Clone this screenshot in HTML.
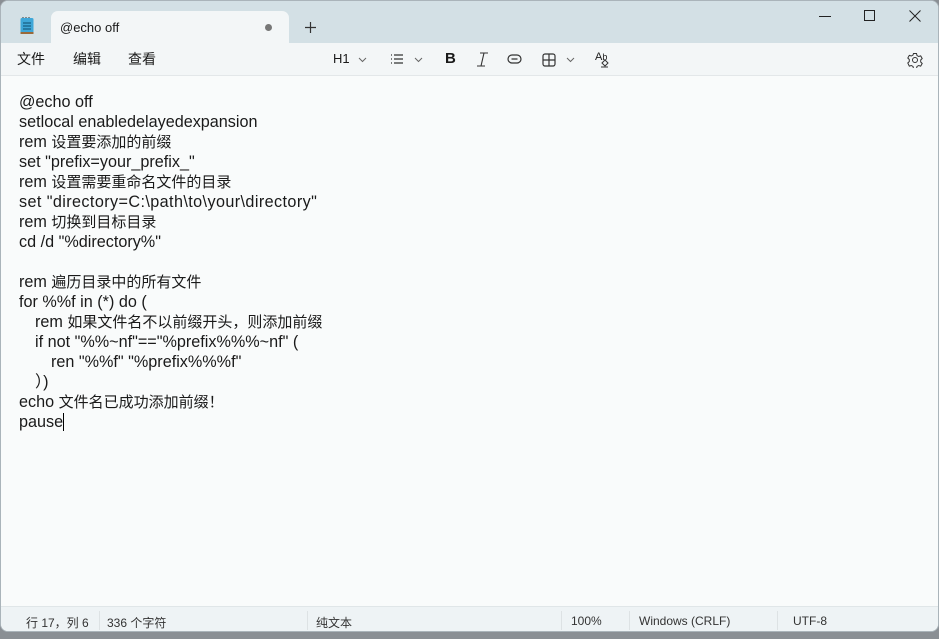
<!DOCTYPE html>
<html><head><meta charset="utf-8"><style>
*{margin:0;padding:0;box-sizing:border-box}
body{width:939px;height:639px;background:#8a8f94;position:relative;overflow:hidden;font-family:"Liberation Sans","Noto Sans CJK SC",sans-serif;color:#1a1a1a}
.win{position:absolute;left:0;top:0;width:939px;height:632px;background:#f9fbfb;border:1px solid #aab4ba;border-radius:8px;overflow:hidden}
.title{position:absolute;left:0;top:0;width:100%;height:42px;background:#d3e0e5}
.tab{position:absolute;left:50px;top:10px;width:238px;height:33px;background:#f3f6f7;border-radius:7px 7px 0 0}
.tab span{position:absolute;left:9px;top:9px;font-size:13px}
.dot{position:absolute;left:214px;top:13px;width:7px;height:7px;border-radius:50%;background:#777}
.tb{position:absolute;left:0;top:42px;width:100%;height:33px;background:#f3f6f7;border-bottom:1px solid #e3e7e9;font-size:14px}
.tb .m{position:absolute;top:6px}
.ed{position:absolute;left:18px;top:91px;font-size:16.2px;line-height:20px}
.ed div{height:20px;white-space:pre}
.c{font-size:15px}
.sb{position:absolute;left:0;top:605px;width:100%;height:27px;background:#eef3f5;border-top:1px solid #e0e6e8;font-size:12px;color:#333}
.sb span{position:absolute;top:7px}
.sep{position:absolute;top:4px;width:1px;height:19px;background:#dde2e4}
svg{position:absolute}
</style></head><body>
<div class="win">
<div class="title">
 <svg style="left:19px;top:16px" width="14" height="18" viewBox="0 0 14 18"><rect x="0.5" y="1" width="13" height="16" rx="1.5" fill="#3fa7d8"/><rect x="0.5" y="15" width="13" height="2" fill="#9b6a3a"/><path d="M3 6h8M3 9h8M3 12h8" stroke="#0d4d6e" stroke-width="1"/><path d="M3 1v-1M6 1v-1M9 1v-1" stroke="#333"/></svg>
 <div class="tab"><span>@echo off</span><div class="dot"></div></div>
 <svg style="left:303px;top:20px" width="13" height="13"><path d="M6.5 1v11M1 6.5h11" stroke="#333" stroke-width="1.2"/></svg>
 <svg style="left:818px;top:14px" width="12" height="3"><path d="M0 1.5h12" stroke="#222"/></svg>
 <svg style="left:863px;top:9px" width="12" height="12"><rect x="0.5" y="0.5" width="10" height="10" fill="none" stroke="#222"/></svg>
 <svg style="left:908px;top:9px" width="12" height="12"><path d="M0.5 0.5l11 11M11.5 0.5l-11 11" stroke="#222"/></svg>
</div>
<div class="tb">
 <span class="m" style="left:16px">文件</span><span class="m" style="left:72px">编辑</span><span class="m" style="left:127px">查看</span>
 <span class="m" style="left:332px;font-size:13px;top:8px">H1</span>
 <svg style="left:357px;top:14px" width="9" height="6"><path d="M1 1l3.5 3.5L8 1" stroke="#666" fill="none"/></svg>
 <svg style="left:389px;top:10px" width="14" height="12"><path d="M1 2h1M1 6h1M1 10h1M4 2h9M4 6h9M4 10h9" stroke="#333" stroke-width="1.2"/></svg>
 <svg style="left:413px;top:14px" width="9" height="6"><path d="M1 1l3.5 3.5L8 1" stroke="#666" fill="none"/></svg>
 <span class="m" style="left:444px;font-weight:bold;font-size:15px;top:7px">B</span>
 <svg style="left:475px;top:9px" width="13" height="15"><path d="M4 1h8M1 14h8M8 1L5 14" stroke="#333" stroke-width="1.1" fill="none"/></svg>
 <svg style="left:506px;top:11px" width="15" height="10"><rect x="1" y="1" width="13" height="8" rx="4" fill="none" stroke="#333" stroke-width="1.2"/><path d="M4.5 5h6" stroke="#333" stroke-width="1.2"/></svg>
 <svg style="left:541px;top:10px" width="14" height="14"><rect x="1" y="1" width="12" height="12" rx="2" fill="none" stroke="#333" stroke-width="1.2"/><path d="M7 1v12M1 7h12" stroke="#333" stroke-width="1.2"/></svg>
 <svg style="left:565px;top:14px" width="9" height="6"><path d="M1 1l3.5 3.5L8 1" stroke="#666" fill="none"/></svg>
 <span class="m" style="left:594px;font-size:11px;top:8px">A<span style="position:static;font-size:9px">b</span></span>
 <svg style="left:599px;top:15px" width="10" height="10"><path d="M2 5l3-3 3 3-3 3z" fill="none" stroke="#333"/><path d="M1 9h7" stroke="#333"/></svg>
 <svg style="left:906px;top:9px" width="16" height="16" viewBox="0 0 16 16"><circle cx="8" cy="8" r="2.5" fill="none" stroke="#333"/><path d="M6.5 1.5h3l.5 2 1.7 1 2-.6 1.5 2.6-1.5 1.5v2l1.5 1.5-1.5 2.6-2-.6-1.7 1-.5 2h-3l-.5-2-1.7-1-2 .6L.8 11l1.5-1.5v-2L.8 6l1.5-2.6 2 .6 1.7-1z" fill="none" stroke="#333" stroke-width="1"/></svg>
</div>
<div class="ed"><div>@echo off</div><div>setlocal enabledelayedexpansion</div><div>rem <span class="c">设置要添加的前缀</span></div><div>set "prefix=your_prefix_"</div><div>rem <span class="c">设置需要重命名文件的目录</span></div><div style="letter-spacing:0.4px">set "directory=C:\path\to\your\directory"</div><div>rem <span class="c">切换到目标目录</span></div><div>cd /d "%directory%"</div><div></div><div>rem <span class="c">遍历目录中的所有文件</span></div><div>for %%f in (*) do (</div><div style="margin-left:16px">rem <span class="c">如果文件名不以前缀开头，则添加前缀</span></div><div style="margin-left:16px">if not "%%~nf"=="%prefix%%%~nf" (</div><div style="margin-left:32px">ren "%%f" "%prefix%%%f"</div><div style="margin-left:16px">）)</div><div>echo <span class="c">文件名已成功添加前缀！</span></div><div>pause<span style="display:inline-block;width:1px;height:18px;background:#000;vertical-align:-4px"></span></div></div>
<div class="sb">
 <span style="left:25px">行 17，列 6</span><div class="sep" style="left:98px"></div>
 <span style="left:106px">336 个字符</span><div class="sep" style="left:306px"></div>
 <span style="left:315px">纯文本</span><div class="sep" style="left:560px"></div>
 <span style="left:570px">100%</span><div class="sep" style="left:628px"></div>
 <span style="left:638px">Windows (CRLF)</span><div class="sep" style="left:776px"></div>
 <span style="left:792px">UTF-8</span>
</div>
</div>
</body></html>
